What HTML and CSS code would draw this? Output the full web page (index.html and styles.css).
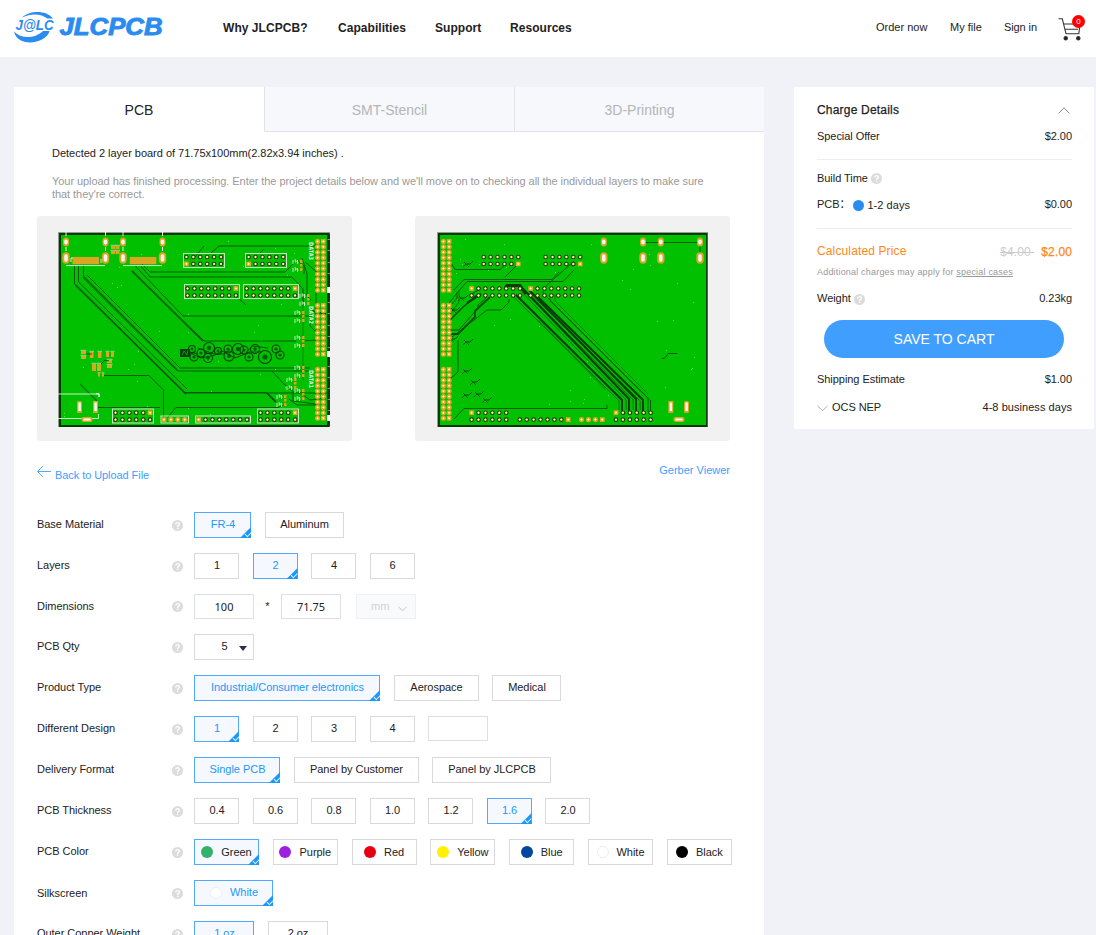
FILE: index.html
```html
<!DOCTYPE html>
<html lang="en">
<head>
<meta charset="utf-8">
<title>JLCPCB</title>
<link rel="stylesheet" href="styles.css">
</head>
<body>
<svg class="defs" width="0" height="0">
  <symbol id="help" viewBox="0 0 11 11"><circle cx="5.5" cy="5.5" r="5.5" fill="#dcdcdc"/><path d="M3.7 4.5C3.7 2 7.4 2.1 7.4 4.2 7.4 5.4 5.6 5.4 5.6 6.9M5.6 7.8V9.1" fill="none" stroke="#fff" stroke-width="1.3"/></symbol>
</svg>
<header class="topbar">
  <svg class="logo" width="150" height="32" viewBox="14 11 150 32">
    <path d="M22 17.5C29 10.5 46 9.5 53 18.5L47.5 18.5C42 14 32 12.5 22 17.5Z" fill="#2a8cf0"/>
    <path d="M14 31.5C16 42.5 31 45 41 40C46 37.5 49 34 49.5 31L43 31C36 38 22 40 14 31.5Z" fill="#2a8cf0"/>
    <text class="logo-mark" x="15.5" y="30.3" textLength="38" lengthAdjust="spacingAndGlyphs">J@LC</text>
    <text class="logo-name" x="59.5" y="34.5" textLength="103" lengthAdjust="spacingAndGlyphs">JLCPCB</text>
  </svg>
  <nav class="nav"><a class="n1">Why JLCPCB?</a><a class="n2">Capabilities</a><a class="n3">Support</a><a>Resources</a></nav>
  <div class="account"><a class="a1">Order now</a><a class="a2">My file</a><a class="a3">Sign in</a>
    <span class="cart">
      <svg width="26" height="26" viewBox="1058 17 26 26" fill="none" stroke="#333" stroke-width="1.1"><path d="M1058.5 18.8H1062.3L1066 33.8H1078.8L1080 24M1064 24H1075M1065 29.3H1078"/><circle cx="1065.7" cy="38.2" r="1.7" fill="#222"/><circle cx="1078.3" cy="38.2" r="1.7" fill="#222"/></svg>
      <b class="badge">0</b>
    </span>
  </div>
</header>
<div class="page">
<main class="panel">
  <div class="tabs"><div class="tab on">PCB</div><div class="tab">SMT-Stencil</div><div class="tab">3D-Printing</div></div>
  <p class="detected">Detected 2 layer board of 71.75x100mm(2.82x3.94 inches) .</p>
  <p class="note">Your upload has finished processing. Enter the project details below and we'll move on to checking all the individual layers to make sure<br>that they're correct.</p>
  <div class="previews">
    <svg id="front" class="board" width="315" height="225" viewBox="37 216 315 225"></svg>
    <svg id="back" class="board" width="315" height="225" viewBox="415 216 315 225"></svg>
  </div>
  <div class="links">
    <a class="back"><svg width="14" height="12" viewBox="0 0 14 12" fill="none" stroke="#409eff" stroke-width=".9"><path d="M14 6.5H.8M5.8 1.2L.6 6.5L5.8 11.8"/></svg>Back to Upload File</a>
    <a class="viewer">Gerber Viewer</a>
  </div>
  <div class="form">
    <div class="row"><label>Base Material</label><svg class="q"><use href="#help"/></svg><div class="opts"><span class="opt on w57">FR-4</span><span class="opt w79">Aluminum</span></div></div>
    <div class="row"><label>Layers</label><svg class="q"><use href="#help"/></svg><div class="opts"><span class="opt">1</span><span class="opt on">2</span><span class="opt">4</span><span class="opt">6</span></div></div>
    <div class="row dims"><label>Dimensions</label><svg class="q"><use href="#help"/></svg><div class="opts dim"><span class="field">100</span><span class="star">*</span><span class="field">71.75</span><span class="unit">mm<svg width="9" height="6" viewBox="0 0 9 6" fill="none" stroke="#c0c4cc"><path d="M.5 .7L4.5 4.9L8.5 .7"/></svg></span></div></div>
    <div class="row"><label>PCB Qty</label><svg class="q"><use href="#help"/></svg><div class="opts"><span class="opt qty">5<i></i></span></div></div>
    <div class="row"><label>Product Type</label><svg class="q"><use href="#help"/></svg><div class="opts"><span class="opt on w186">Industrial/Consumer electronics</span><span class="opt w85">Aerospace</span><span class="opt w69">Medical</span></div></div>
    <div class="row"><label>Different Design</label><svg class="q"><use href="#help"/></svg><div class="opts"><span class="opt on">1</span><span class="opt">2</span><span class="opt">3</span><span class="opt">4</span><span class="field"></span></div></div>
    <div class="row"><label>Delivery Format</label><svg class="q"><use href="#help"/></svg><div class="opts"><span class="opt on w86">Single PCB</span><span class="opt w125">Panel by Customer</span><span class="opt w119">Panel by JLCPCB</span></div></div>
    <div class="row"><label>PCB Thickness</label><svg class="q"><use href="#help"/></svg><div class="opts"><span class="opt">0.4</span><span class="opt">0.6</span><span class="opt">0.8</span><span class="opt">1.0</span><span class="opt">1.2</span><span class="opt on">1.6</span><span class="opt">2.0</span></div></div>
    <div class="row"><label>PCB Color</label><svg class="q"><use href="#help"/></svg><div class="opts colors"><span class="opt on"><i class="dot green"></i>Green</span><span class="opt"><i class="dot purple"></i>Purple</span><span class="opt"><i class="dot red"></i>Red</span><span class="opt"><i class="dot yellow"></i>Yellow</span><span class="opt"><i class="dot blue"></i>Blue</span><span class="opt"><i class="dot white"></i>White</span><span class="opt"><i class="dot black"></i>Black</span></div></div>
    <div class="row silk"><label>Silkscreen</label><svg class="q"><use href="#help"/></svg><div class="opts"><span class="opt on w79"><i class="dot white"></i>White</span></div></div>
    <div class="row"><label>Outer Copper Weight</label><svg class="q"><use href="#help"/></svg><div class="opts"><span class="opt on w60">1 oz</span><span class="opt w60">2 oz</span></div></div>
  </div>
</main>
<aside class="charges">
  <div class="line title"><span>Charge Details</span><svg width="12" height="7" viewBox="0 0 12 7" fill="none" stroke="#888"><path d="M.5 6.5L6 .8L11.5 6.5"/></svg></div>
  <div class="line offer"><span>Special Offer</span><span>$2.00</span></div>
  <hr>
  <div class="line build"><span class="withq">Build Time<svg class="q"><use href="#help"/></svg></span></div>
  <div class="line pcb"><span class="time">PCB：<i></i><em>1-2 days</em></span><span>$0.00</span></div>
  <hr>
  <div class="line calc"><span>Calculated Price</span><span class="prices"><s>$4.00&nbsp;</s><strong>$2.00</strong></span></div>
  <div class="line extra"><span>Additional charges may apply for <u>special cases</u></span></div>
  <div class="line weight"><span class="withq">Weight<svg class="q"><use href="#help"/></svg></span><span>0.23kg</span></div>
  <button class="save">SAVE TO CART</button>
  <div class="line ship"><span>Shipping Estimate</span><span>$1.00</span></div>
  <div class="line ocs"><span class="carrier"><svg width="11" height="7" viewBox="0 0 11 7" fill="none" stroke="#aaa"><path d="M.5 .8L5.5 5.8L10.5 .8"/></svg>OCS NEP</span><span class="days">4-8 business days</span></div>
</aside>
</div>
<script src="boards.js"></script>
</body>
</html>
```
FILE: styles.css
```css
* { box-sizing: border-box; }
body { margin: 0; height: 935px; overflow: hidden; background: #f1f2f7; font: 11px/13px "Liberation Sans", Arial, sans-serif; color: #222; }
.defs { position: absolute; }
.topbar { height: 57px; background: #fff; display: flex; align-items: center; padding: 0 11px 0 14px; }
.logo { display: block; margin-bottom: 3px; }
.logo text { fill: #2a8cf0; font-weight: bold; }
.logo-mark { font-family: "Liberation Sans", sans-serif; font-size: 14.5px; font-style: italic; stroke: #fff; stroke-width: 1.5px; paint-order: stroke; }
.logo-name { font-family: "Liberation Sans", sans-serif; font-size: 23px; font-style: italic; stroke: #2a8cf0; stroke-width: .9px; }
.nav { display: flex; margin-left: 59px; font-size: 12px; font-weight: bold; line-height: 16px; white-space: nowrap; padding-bottom: 1px; }
.nav a { letter-spacing: .05px; }
.n1 { width: 115px; } .n2 { width: 97px; } .n3 { width: 75px; }
.account { margin-left: auto; display: flex; align-items: center; }
.account a { padding-bottom: 2px; }
.a1 { width: 74px; } .a2 { width: 54px; } .a3 { width: 54px; letter-spacing: -.1px; }
.cart { position: relative; width: 27px; height: 26px; margin-top: 3px; }
.badge { position: absolute; left: 14px; top: -2px; width: 13px; height: 13px; border-radius: 50%; background: #f00; color: #fff; font: 8px/14px "Liberation Sans", sans-serif; text-align: center; }
.page { display: flex; align-items: flex-start; gap: 30px; padding: 30px 0 0 14px; }
.panel { width: 750px; height: 848px; background: #fff; flex: none; }
.tabs { display: flex; height: 45px; font-size: 14px; }
.tab { width: 250px; display: flex; align-items: center; justify-content: center; background: #f6f8fb; border-left: 1px solid #dfe4e9; border-bottom: 1px solid #dfe4e9; color: #b3b5b9; padding-top: 2px; }
.tab.on { background: #fff; color: #222; border: 0; }
.detected { margin: 15px 0 0 38px; letter-spacing: -.02px; }
.note { margin: 15px 0 0 38px; color: #999; white-space: nowrap; letter-spacing: -.058px; }
.previews { display: flex; gap: 63px; margin: 15px 0 0 23px; }
.board { display: block; border-radius: 3px; background: #f1f1f1; }
.links { display: flex; justify-content: space-between; margin: 23px 34px 0 23px; height: 48px; color: #409eff; }
.back { display: flex; gap: 4px; padding-top: 5px; height: 18px; letter-spacing: -.07px; }
.back svg { margin-top: -4px; }
.form { display: flex; flex-direction: column; gap: 15px; padding-left: 23px; }
.row { display: flex; align-items: center; height: 26px; flex: none; }
.row.dims { height: 25px; }
.row label { width: 135px; padding-bottom: 1px; letter-spacing: -.04px; }
.silk label { padding-bottom: 0; }
.q { width: 11px; height: 11px; flex: none; }
.opts { display: flex; gap: 13.5px; margin-left: 11px; }
.opt { position: relative; display: flex; align-items: center; justify-content: center; width: 45px; height: 26px; padding: 0 0 1px 1px; border: 1px solid #d9d9d9; white-space: nowrap; letter-spacing: -.03px; }
.opt.on { color: #1b98fa; border-color: #53a8ff; background: #f5f9ff; }
.opt.on::before { content: ""; position: absolute; right: -1px; bottom: -1px; width: 11px; height: 11px; background: #1b98fa; clip-path: polygon(100% 0, 100% 100%, 0 100%); }
.opt.on::after { content: ""; position: absolute; right: 0; bottom: 2px; width: 4.5px; height: 2.5px; border: solid #fff; border-width: 0 0 .9px .9px; transform: rotate(-45deg); opacity: .85; }
.w57 { width: 57px; } .w60 { width: 60px; } .w69 { width: 69px; } .w79 { width: 79px; } .w85 { width: 85px; } .w86 { width: 86px; }
.w119 { width: 119px; } .w125 { width: 125px; } .w186 { width: 186px; }
.field { display: flex; align-items: center; justify-content: center; width: 60px; height: 25px; border: 1px solid #dcdfe6; font-family: "Noto Sans", sans-serif; padding-bottom: 1px; }
.dim { gap: 0; }
.star { width: 27px; text-align: center; line-height: 25px; }
.unit { display: flex; align-items: center; gap: 9px; width: 60px; height: 25px; margin-left: 15px; padding-left: 14px; border: 1px solid #eef0f5; background: #f9fafc; color: #d0d3d9; }
.unit svg { margin-top: 4px; }
.opt.qty { width: 60px; }
.qty i { position: absolute; right: 6px; top: 11px; border: solid transparent; border-width: 5px 4px 0; border-top-color: #2b2f4c; }
.colors { gap: 13.8px; }
.colors .opt { width: 65px; color: #222; padding: 0; }
.dot { width: 12px; height: 12px; border-radius: 50%; margin-right: 8px; flex: none; }
.green { background: #32b16c; } .purple { background: #9d22e0; } .red { background: #e60012; } .yellow { background: #fff100; }
.blue { background: #00479d; } .white { background: #fff; border: 1px solid #eee; } .black { background: #000; }
.charges { width: 300px; height: 342px; background: #fff; padding: 8px 22px 0 23px; flex: none; }
.line { display: flex; justify-content: space-between; align-items: center; height: 20px; white-space: nowrap; letter-spacing: -.05px; }
.line.title { height: 30px; font-size: 12px; letter-spacing: .2px; -webkit-text-stroke: .25px #222; }
.title svg { margin: 1px 2px 0 0; }
.line.offer { height: 22px; }
.charges hr { border: 0; height: 1px; margin: 12px 0 0; background: #eee; }
.build { margin-top: 8px; }
.withq { display: flex; align-items: center; gap: 3px; }
.withq .q { margin-top: 1px; }
.weight .q { margin-top: 3px; }
.pcb { margin-top: 6px; margin-bottom: 14px; }
.time { display: flex; align-items: center; font-family: "Liberation Sans", "Noto Sans CJK SC", sans-serif; }
.time i { width: 11px; height: 11px; border-radius: 50%; background: #2a8cf0; margin: 2px 3px 0 3px; }
.time em { font-style: normal; padding-top: 2px; letter-spacing: .05px; }
.calc { margin-top: 12px; font-size: 12px; color: #ff8819; }
.line.calc { letter-spacing: .13px; }
.prices { display: flex; gap: 7px; padding-top: 2px; }
.prices s { color: #ccc; }
.prices strong { font-weight: normal; -webkit-text-stroke: .25px #ff8819; }
.extra { margin-top: 1px; font-size: 9px; color: #999; }
.line.extra { letter-spacing: .19px; }
.weight { margin-top: 6px; }
.save { display: block; width: 240px; height: 38px; margin: 12px 0 11px 7px; border: 0; border-radius: 19px; background: #409eff; color: #fff; font: 14px "Liberation Sans", sans-serif; padding: 0; }
.ocs { margin-top: 8px; }
.days { letter-spacing: .05px; }
.carrier { display: flex; align-items: center; gap: 4px; }
.carrier svg { margin-top: 2px; }
```
FILE: boards.js
```js
const GOLD = '#daa520', DARK = '#0a3c0a', GREEN = '#00c000';
const rect = (x, y, w, h, f, extra = '') => `<rect x="${x}" y="${y}" width="${w}" height="${h}" fill="${f}" ${extra}/>`;
const line = (pts, w = 0.9, c = DARK, o = 0.85) => `<polyline points="${pts}" fill="none" stroke="${c}" stroke-width="${w}" opacity="${o}"/>`;
const box = (x, y, w, h) => rect(x, y, w, h, 'none', 'stroke="#d4f2d4" stroke-width="0.9"');

function pin(x, y, kind) {
  const cross = `<path d="M${x - 1.1} ${y}h2.2M${x} ${y - 1.1}v2.2" stroke="#fffbe8" stroke-width=".8"/>`;
  if (kind === 'sq') return rect(x - 2.3, y - 2.3, 4.6, 4.6, '#eca81f') + cross;
  if (kind === 'gold') return `<circle cx="${x}" cy="${y}" r="2.6" fill="#dfa51c"/>` + cross;
  return `<circle cx="${x}" cy="${y}" r="2.3" fill="#233808"/><circle cx="${x}" cy="${y}" r="1.2" fill="#cfa83c"/>` + cross;
}
function header(x, y, cols, rows, sc, sr, kind = 'dark') {
  let s = '';
  for (let r = 0; r < rows; r++) for (let c = 0; c < cols; c++)
    s += pin(x + c * 6.92, y + r * 6.95, c === sc && r === sr ? 'sq' : kind);
  return s;
}
function ovals(xs) {
  let s = '';
  for (const x of xs) for (const [y, h, w] of [[242, 9, 6], [258, 11.5, 7.4]])
    s += rect(x - w / 2, y - h / 2, w, h, GOLD, `rx="${w / 2}"`) + rect(x - 1.8, y - h / 2 + 2, 3.6, h - 4, '#f3f3f3', 'rx="1.7"');
  return s;
}
function edgeConnector(x) {
  let s = '';
  for (const y of [241.4, 305.4, 369.4]) for (let r = 0; r < 10; r++)
    s += pin(x, y + r * 5.43, 'gold') + pin(x + 5.7, y + r * 5.43, r % 9 ? 'gold' : 'sq');
  return s;
}
function specks(x0, seed, n) {
  let s = '', v = seed;
  const next = () => (v = (v * 16807) % 2147483647) / 2147483647;
  for (let i = 0; i < n; i++) s += rect(Math.round(x0 + next() * 258), Math.round(238 + next() * 184), 0.8, 0.8, '#9be89b');
  return s;
}
const base = (x, w) => rect(x, 232, w, 195, '#8fa08f') + rect(x + 1, 233, w - 1.5, 194, '#073807') + rect(x + 3, 235, w - 5, 190, GREEN);
const jacks = (a, b, c) => rect(a - 2.5, 401, 5, 12, GOLD) + rect(a - 1.2, 402.5, 2.6, 8.5, '#f3f3f3') +
  rect(b - 2.5, 401, 5, 12, GOLD, 'rx="1.5"') + rect(b - 1.2, 402.5, 2.6, 8.5, '#f3f3f3') +
  rect(c - 5.5, 417, 11, 5, GOLD, 'rx="2"') + rect(c - 3.5, 418.5, 7, 2, '#fff');
const parts = list => list.map(([x, y, w = 4, h = 3]) => rect(x, y, w, h, GOLD) + `<path d="M${x - .5} ${y - .7}h${w + 1}" stroke="#c9efc9" stroke-width=".7"/>`).join('');

let f = base(58, 272) + specks(64, 91, 40);
f += line('74.5,265 74.5,284 185,393 330,393') + line('78.5,265 78.5,282 187,389') + line('83.5,265 83.5,276 178,371 312,371') + line('87,275 180,368 310,368');
f += line('75.5,285 186,394', 1.8, DARK, .55) + line('83,277 130,324 177,370', 1.8, DARK, .5) + line('185,392.5 266,392.5 275,402');
f += line('132,271 203,341', 1.8, DARK, .65) + line('136,265 136,267 183,316 313,316') + line('190,328 204,341 296,341') + line('140,265 150,277 292,277 303,289 303,302');
f += line('142,264 150,272 285,272 297,260') + line('195,257 204,246') + line('211,253 219,246 316,246') + line('238,298 246,305') + line('260,253 264,249');
f += line('104,375.5 149,375.5 163.5,390 163.5,419') + line('98,407.5 160,407.5') + line('168,417 176,407.5 278,407.5 286,404') + line('80,384 97,401', 1.2, DARK, .5);
f += line('302,258 307,274 307,296 311,300') + line('303,298 303,380', .8, DARK, .5) + line('310,316 310,326 316,332 316,240') + line('272,371 284,384 293,391 293,401 316,404') + line('289,399 297,405 318,405') + line('303,395 310,400 326,398');
f += line('304,274 304,266 297,260') + line('305,262 318,273') + line('302,341 316,340') + line('312,311 326,314', 1.5) + line('267,393 276,402', 1.6);
f += ovals([66, 105.5, 123, 162.5]) + rect(72.5, 257, 26.5, 7.2, GOLD) + rect(129.8, 257, 26.5, 7.2, GOLD);
f += line('66,265.6 105,265.6', .9, '#dff5df', 1) + line('123,265.6 162,265.6', .9, '#dff5df', 1);
for (const x of [66, 105.5, 123, 162.5]) f += line(`${x},232 ${x},236`, .9, '#fff', 1) + line(`${x},247 ${x},251`, .9, '#fff', 1);
f += line('71,262 71,258 73,258', .8, '#fff', 1) + line('101,263 101,259', .8, '#fff', 1);
f += box(183.5, 253.5, 41, 14) + header(186.4, 257, 6, 2, 0, 1) + box(245.5, 253.5, 41, 14) + header(248.6, 257, 6, 2, 0, 1);
f += box(184.5, 284.6, 55, 14) + header(187.5, 288.5, 8, 2, 7, 0) + box(243.5, 284.6, 55, 14) + header(246.6, 288.5, 8, 2, 7, 0);
f += box(112.5, 409, 41, 14) + header(115.5, 412.7, 6, 2, 5, 0) + box(161, 416, 27.5, 7) + header(164, 419.6, 4, 1, 0, 0, 'gold');
f += box(195.5, 416, 55, 7) + header(198.6, 419.6, 8, 1, 0, 0) + box(257.5, 409, 41, 14) + header(260.5, 412.7, 6, 2, 5, 0);
f += rect(327, 234, 3, 192, '#123812') + [239, 250, 262, 273, 302, 313, 325, 336, 347, 366, 377, 388, 399, 410].map(y => rect(327.5, y, 2.5, .9, '#8aa88a')).join('') + [287, 351, 415].map(y => rect(327, y, 3, 6, '#fff')).join('') + edgeConnector(317.6);
f += parts([[111, 246], [115.5, 246], [111, 251], [115.5, 251], [81, 351, 5, 3], [81, 356, 5, 3], [90, 352, 3.5, 6], [98, 352, 3.5, 6], [106, 352, 3, 5], [111, 352, 3, 5], [107, 360, 5, 3], [107, 365, 5, 3], [92, 364, 4, 7], [97, 364, 4, 7], [98, 373.5, 2], [102, 373.5, 2]]) + line('101,364 105,360 109,361', 1) + line('86,354 92,354');
for (const [x, y] of [[300, 260], [307, 294], [302, 311], [302, 336], [302, 366], [294, 378], [302, 389], [284, 395]])
  f += rect(x, y, 2.5, 3, GOLD) + rect(x, y + 4, 2.5, 2.5, GOLD) + rect(x, y + 8, 2.5, 3, GOLD) +
    [0, 8].map(d => `<path d="M${x - 7} ${y + d}v4m1.5-4h1.5v2h-1.5M${x - 2.5} ${y + d}v4m0-2h1" stroke="#cff3cf" stroke-width=".9" fill="none"/>`).join('');
for (const y of [242, 306, 370]) f += `<text transform="translate(308.5 ${y}) rotate(90)" textLength="18" lengthAdjust="spacingAndGlyphs" fill="#d9f5d9" font-weight="bold" font-size="6" font-family="DejaVu Sans">DATA${y === 242 ? 3 : y === 306 ? 2 : 1}</text>`;
f += line('58,394 99,394 99,397', .9, '#dff5df', 1) + line('96,393.7 99,393.7 99,397', 1, '#fff', 1) + line('58,418.5 98.5,418.5 98.5,414', .9, '#dff5df', 1) + jacks(95.5, 79.5, 87);
f += rect(180, 349, 10, 8, DARK) + line('182,355 184,351 187,355 188,350', .8, GREEN, 1);
for (const [x, y, r] of [[192, 349, 3.5], [194, 357, 4], [201, 353, 4], [209, 348, 5.5], [208, 358, 4.5], [218, 351, 3.5], [228, 349, 4], [229, 356, 5], [238, 349, 5.5], [244, 350, 4], [249, 357, 4], [255, 349, 4.5], [265, 357, 6.5], [276, 349, 4], [280, 355, 4]])
  f += `<circle cx="${x}" cy="${y}" r="${r}" fill="none" stroke="${DARK}" stroke-width="1.1"/><circle cx="${x}" cy="${y}" r="${r * .4}" fill="${DARK}" opacity=".75"/>`;
f += line('190,353 201,358 215,355 222,351 235,358 250,352 262,352', 1) + line('198,348 214,354 224,354') + line('244,355 252,346 268,348');
document.getElementById('front').innerHTML = f;

let b = base(437, 271) + specks(444, 57, 45);
b += line('451,263 455,269.5 500,269.5 506,264') + line('454,290 464,279.5 552,279.5 559,272') + line('452,304 457,298 457,293 467,281.5 563,281.5 574,270') + line('505,277 516,266', 1) + line('546,286 574,261');
b += line('450,334 458,334 475,317 475,311 490,297', 1.8) + line('450,330 459,330 478,308 478,305 487,297') + line('452,337 487,310 501,310 509,302 509,299') + line('459,290 459,302 450,314', 1, DARK, .6) + line('450,320 462,308 477,295', 1.5) + line('470,295 480,289', 1) + line('458,340 458,372 450,379') + line('446,307 457,293');
b += line('505,288 507,285.5 520,285.5 526,294', 3, DARK, 1) + line('467,303 481,294', 2.4);
[[516, 295, 622, 400], [524, 290, 629, 399], [529, 290, 636, 399], [536, 295, 643, 400]].forEach(([x, y, X, Y], i) => {
  b += line(`${x},${y} ${X},${Y} ${X},412`, 2, DARK, 1) + line(`${x - 2.8},${y + 1.5} ${X - 2.8},${Y + 1} ${X - 2.8},410`, .7);
});
b += line('538,320 605,389', 1.6, DARK, .25) + line('543,291 543,293 648,398 648,412', .8) + line('550,294 550,301 635,386 651,401', .8, DARK, .6) + line('555,294 555,301 648,394', .8, DARK, .6) + line('650.5,400 650.5,412');
b += line('454,419 464,408.5 607,408.5 607,405') + line('645,242.5 700,242.5 700,258') + line('662,358.5 665,358 668,353.5 677.5,353.5');
for (const [x, y] of [[466, 264], [461, 298], [466, 342], [465, 371], [473, 382], [465, 395], [477, 394], [485, 400], [451, 339], [453, 310]])
  b += line(`${x - 2},${y - 2} ${x},${y} ${x + 4},${y} ${x + 7},${y - 3}`, 1) + line(`${x - 3},${y + 3} ${x},${y} ${x + 3},${y + 3}`, 1, DARK, .7);
b += edgeConnector(443.4) + header(483.7, 257, 6, 2, 5, 1) + header(545.6, 257, 6, 2, 5, 1) + header(471.6, 288.5, 8, 2, 0, 0) + header(530.6, 288.5, 8, 2, 0, 0);
b += header(471.6, 412.7, 6, 2, 0, 0) + header(519.8, 419.6, 8, 1, 7, 0) + header(581.5, 419.6, 4, 1, 3, 0, 'gold') + header(616, 412.7, 6, 2, 0, 0);
b += ovals([603.8, 643, 660.8, 700]) + jacks(670.8, 686.5, 679);
document.getElementById('back').innerHTML = b;
```
